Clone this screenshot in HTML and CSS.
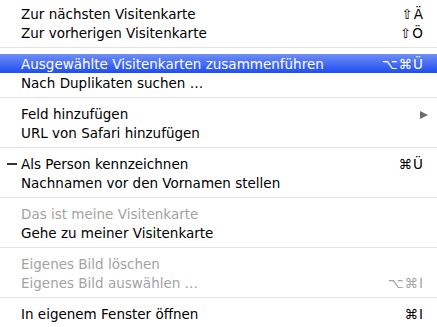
FILE: index.html
```html
<!DOCTYPE html>
<html lang="de">

<head>
	<title>Visitenkarte Menü</title>
	<link rel="stylesheet" href="styles.css">
</head>

<body>
	<!-- Menu -->
	<ul class="menu">
		<li class="item"><span class="mark"></span><span class="label">Zur nächsten Visitenkarte</span><span class="key">⇧Ä</span></li>
		<li class="item"><span class="mark"></span><span class="label">Zur vorherigen Visitenkarte</span><span class="key">⇧Ö</span></li>
		<li class="sep"></li>
		<li class="item active"><span class="mark"></span><span class="label">Ausgewählte Visitenkarten zusammenführen</span><span class="key">⌥⌘Ü</span></li>
		<li class="item"><span class="mark"></span><span class="label">Nach Duplikaten suchen …</span><span class="key"></span></li>
		<li class="sep"></li>
		<li class="item"><span class="mark"></span><span class="label">Feld hinzufügen</span><span class="key"><span class="arrow"></span></span></li>
		<li class="item"><span class="mark"></span><span class="label">URL von Safari hinzufügen</span><span class="key"></span></li>
		<li class="sep"></li>
		<li class="item"><span class="mark"><span class="dash"></span></span><span class="label">Als Person kennzeichnen</span><span class="key">⌘Ü</span></li>
		<li class="item"><span class="mark"></span><span class="label">Nachnamen vor den Vornamen stellen</span><span class="key"></span></li>
		<li class="sep"></li>
		<li class="item disabled"><span class="mark"></span><span class="label">Das ist meine Visitenkarte</span><span class="key"></span></li>
		<li class="item"><span class="mark"></span><span class="label">Gehe zu meiner Visitenkarte</span><span class="key"></span></li>
		<li class="sep"></li>
		<li class="item disabled"><span class="mark"></span><span class="label">Eigenes Bild löschen</span><span class="key"></span></li>
		<li class="item disabled"><span class="mark"></span><span class="label">Eigenes Bild auswählen …</span><span class="key">⌥⌘I</span></li>
		<li class="sep"></li>
		<li class="item"><span class="mark"></span><span class="label">In eigenem Fenster öffnen</span><span class="key">⌘I</span></li>
	</ul>
</body>

</html>
```

FILE: styles.css
```css
/* Page reset */
body {
	margin: 0;
	background: #fff;
	font-family: "DejaVu Sans", sans-serif;
	font-size: 13.5px;
	color: #000;
}

/* Menu list */
.menu {
	list-style: none;
	margin: 0;
	padding: 4px 0 0 0;
}

/* One menu row */
.item {
	display: flex;
	align-items: center;
	height: 19px;
	padding-right: 13px;
}

/* Check mark column */
.mark {
	width: 21px;
	display: flex;
	align-items: center;
	padding-left: 7px;
	box-sizing: border-box;
}

.dash {
	width: 10px;
	height: 2px;
	background: #333;
}

.label {
	flex: 1;
	white-space: nowrap;
}

.key {
	white-space: nowrap;
	letter-spacing: 1px;
}

/* Highlighted row */
.active {
	background: linear-gradient(#6f8ef7, #1f4df0);
	color: #fff;
}

/* Greyed out row */
.disabled {
	color: #a3a3a3;
}

/* Separator line */
.sep {
	height: 12px;
	position: relative;
}

.sep::after {
	content: "";
	position: absolute;
	left: 0;
	right: 0;
	top: 5px;
	height: 1px;
	background: #e3e3e3;
}

/* Submenu triangle */
.arrow {
	display: inline-block;
	width: 0;
	height: 0;
	margin-right: -4px;
	border-top: 4px solid transparent;
	border-bottom: 4px solid transparent;
	border-left: 8px solid #6d6d6d;
}
```
